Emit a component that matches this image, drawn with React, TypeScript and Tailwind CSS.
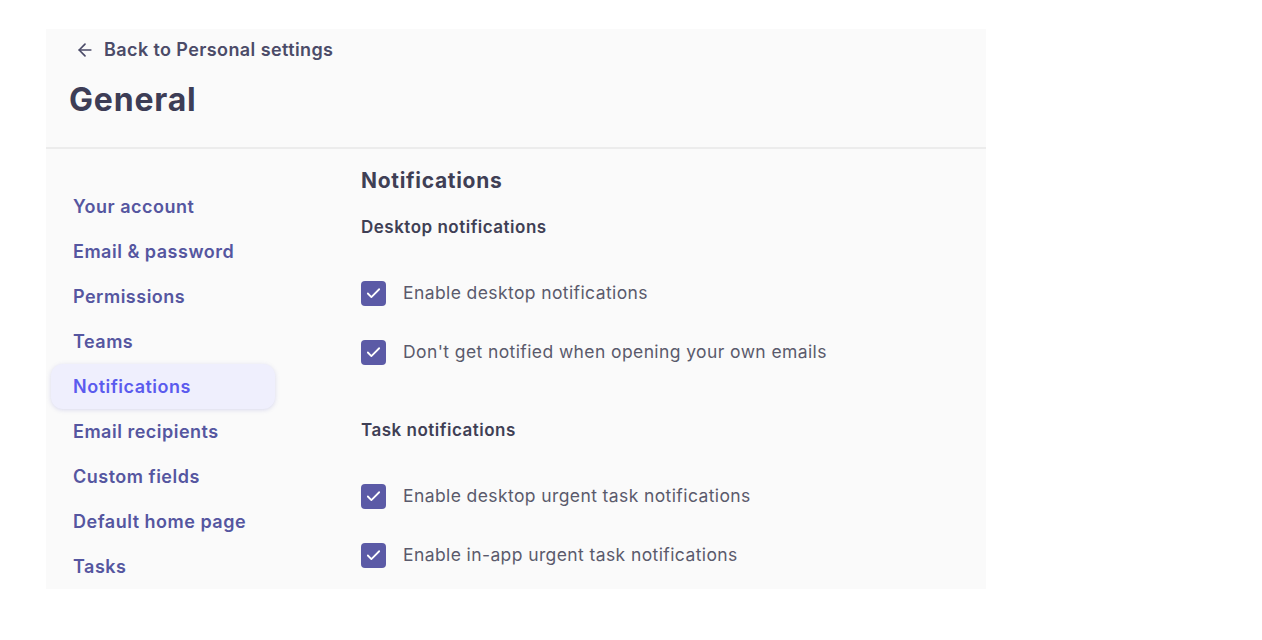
import { ArrowLeft, Check } from "lucide-react";

const navItems = [
  "Your account",
  "Email & password",
  "Permissions",
  "Teams",
  "Notifications",
  "Email recipients",
  "Custom fields",
  "Default home page",
  "Tasks",
];

const sections = [
  {
    title: "Desktop notifications",
    options: ["Enable desktop notifications", "Don't get notified when opening your own emails"],
  },
  {
    title: "Task notifications",
    options: ["Enable desktop urgent task notifications", "Enable in-app urgent task notifications"],
  },
];

function Checkbox() {
  return (
    <span className="flex h-[25px] w-[25px] shrink-0 items-center justify-center rounded-[4px] bg-[#5b5aa6]">
      <Check className="h-[17px] w-[17px] text-white" strokeWidth={2.5} />
    </span>
  );
}

export default function App() {
  const active = "Notifications";

  return (
    <div className="min-h-screen bg-white pt-[29px] pl-[46px] font-['Inter',sans-serif]">
      <div className="w-[940px] h-[560px] bg-[#fafafa] flex flex-col">
        <header className="h-[121px] border-b-2 border-[#ececec] pl-[23px] pt-[7px] flex flex-col">
          <a className="flex items-center gap-[9px] pl-[6px] text-[18px] font-semibold tracking-[0.4px] text-[#4b4b68]">
            <ArrowLeft className="h-[20px] w-[20px]" strokeWidth={2} />
            Back to Personal settings
          </a>
          <h1 className="mt-[21px] text-[32px] leading-none font-bold text-[#3d3d56] tracking-[0.8px]">General</h1>
        </header>

        <div className="flex flex-1">
          <nav className="w-[315px] pl-[5px] pt-[35px] flex flex-col">
            {navItems.map((item) => (
              <div
                key={item}
                className={`h-[45px] w-[224px] flex items-center pl-[22px] rounded-[12px] text-[18px] font-semibold tracking-[0.5px] ${
                  item === active
                    ? "bg-[#efeffd] text-[#5b5bee] shadow-[0_1px_4px_rgba(120,120,200,0.25)]"
                    : "text-[#5556a0]"
                }`}
              >
                {item}
              </div>
            ))}
          </nav>

          <main className="pt-[16px] flex flex-col">
            <h2 className="text-[21px] font-bold tracking-[0.7px] text-[#3f3f55]">Notifications</h2>
            {sections.map((sec, i) => (
              <section key={sec.title} className={i === 0 ? "mt-[18px]" : "mt-[52px]"}>
                <h3 className="text-[17px] font-semibold tracking-[0.5px] text-[#3f3f55]">{sec.title}</h3>
                <div className="mt-[40px] flex flex-col gap-[33px]">
                  {sec.options.map((opt) => (
                    <label key={opt} className="flex items-center gap-[17px] text-[17.5px] tracking-[0.4px] text-[#5a5a6c]">
                      <Checkbox />
                      {opt}
                    </label>
                  ))}
                </div>
              </section>
            ))}
          </main>
        </div>
      </div>
    </div>
  );
}
